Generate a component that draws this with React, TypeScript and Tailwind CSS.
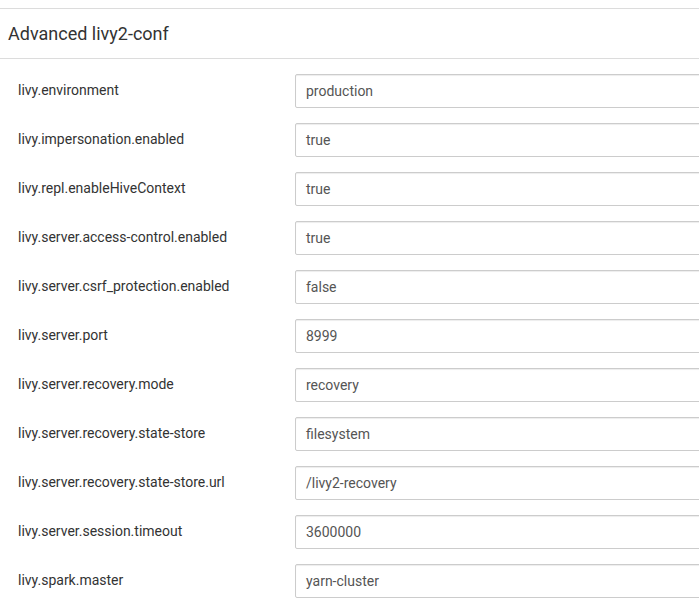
import React from 'react';

const rows: [string, string][] = [
  ['livy.environment', 'production'],
  ['livy.impersonation.enabled', 'true'],
  ['livy.repl.enableHiveContext', 'true'],
  ['livy.server.access-control.enabled', 'true'],
  ['livy.server.csrf_protection.enabled', 'false'],
  ['livy.server.port', '8999'],
  ['livy.server.recovery.mode', 'recovery'],
  ['livy.server.recovery.state-store', 'filesystem'],
  ['livy.server.recovery.state-store.url', '/livy2-recovery'],
  ['livy.server.session.timeout', '3600000'],
  ['livy.spark.master', 'yarn-cluster'],
];

export default function App() {
  return (
    <div className="w-[699px] h-[606px] overflow-hidden bg-white pt-2" style={{ fontFamily: 'Roboto, "Liberation Sans", sans-serif' }}>
      <div className="border-t border-[#dcdcdc]">
        <div className="h-[50px] flex items-center px-2 border-b border-[#dcdcdc]">
          <h2 className="text-[18px] text-[#333]">Advanced livy2-conf</h2>
        </div>
        <div className="pt-[15px] flex flex-col gap-[15px]">
          {rows.map(([k, v]) => (
            <div key={k} className="flex items-center h-[34px]">
              <div className="w-[295px] shrink-0 pl-[18px] text-[14px] text-[#333] -mt-[2px]">{k}</div>
              <div className="w-[430px] shrink-0 h-[34px] border border-[#ccc] rounded-[2px] flex items-center px-[10px] text-[14px] text-[#555] shadow-[inset_0_1px_1px_rgba(0,0,0,0.075)]">
                {v}
              </div>
            </div>
          ))}
        </div>
      </div>
    </div>
  );
}
